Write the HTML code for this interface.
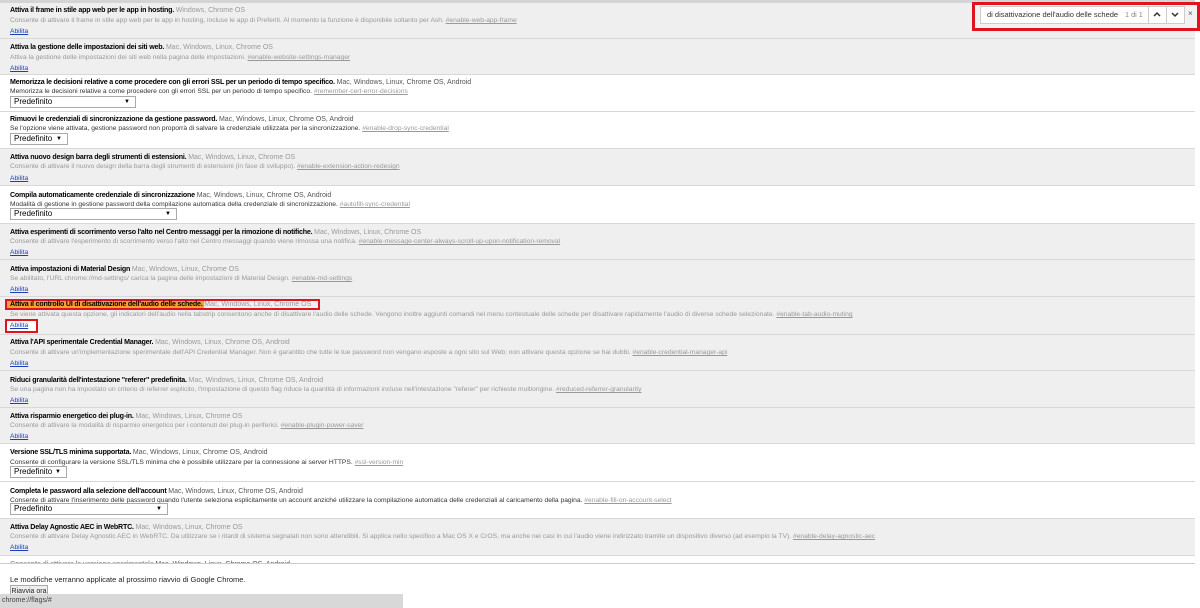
<!DOCTYPE html>
<html><head><meta charset="utf-8">
<style>
*{margin:0;padding:0;box-sizing:border-box}
body{width:1200px;height:608px;overflow:hidden;background:#fff;font-family:"Liberation Sans",sans-serif;position:relative}
.e{position:absolute;left:0;width:1195px;border-bottom:1px solid #d8d8d8}
.g{background:#efefef}
.w{background:#fff}
.t{position:absolute;left:10px;font-size:7.1px;color:#000;white-space:nowrap;line-height:8px;letter-spacing:-0.2px}
.t b{font-weight:bold}
.t .p{color:#555;font-size:7px;letter-spacing:0}
.g .t .p{color:#999}
.d{position:absolute;left:10px;font-size:6.7px;color:#333;white-space:nowrap;line-height:8px}
.g .d{color:#999}
.d u{color:#999}
.a{position:absolute;left:10px;font-size:6.7px;color:#1a3fb8;text-decoration:underline;line-height:8px}
.s{position:absolute;left:10px;height:12px;border:1px solid #aaa;background:#fff;font-size:8px;line-height:10px;padding-left:3px;color:#000}
.s i{position:absolute;right:5px;top:0;font-style:normal;font-size:6px}
</style></head><body>
<div style="position:absolute;left:0;top:0;width:1195px;height:3px;background:#d4d4d4"></div>

<div class="e g" style="top:3px;height:36px">
<div class="t" style="top:3px"><b>Attiva il frame in stile app web per le app in hosting.</b> <span class="p">Windows, Chrome OS</span></div>
<div class="d" style="top:14px">Consente di attivare il frame in stile app web per le app in hosting, incluse le app di Preferiti. Al momento la funzione è disponibile soltanto per Ash. <u>#enable-web-app-frame</u></div>
<div class="a" style="top:25px">Abilita</div></div>

<div class="e g" style="top:39px;height:36px">
<div class="t" style="top:4px"><b>Attiva la gestione delle impostazioni dei siti web.</b> <span class="p">Mac, Windows, Linux, Chrome OS</span></div>
<div class="d" style="top:15px">Attiva la gestione delle impostazioni dei siti web nella pagina delle impostazioni. <u>#enable-website-settings-manager</u></div>
<div class="a" style="top:26px">Abilita</div></div>

<div class="e w" style="top:75px;height:37px">
<div class="t" style="top:3px"><b>Memorizza le decisioni relative a come procedere con gli errori SSL per un periodo di tempo specifico.</b> <span class="p">Mac, Windows, Linux, Chrome OS, Android</span></div>
<div class="d" style="top:13px">Memorizza le decisioni relative a come procedere con gli errori SSL per un periodo di tempo specifico. <u>#remember-cert-error-decisions</u></div>
<div class="s" style="top:21px;width:126px">Predefinito<i>▼</i></div></div>

<div class="e w" style="top:112px;height:37px">
<div class="t" style="top:3px"><b>Rimuovi le credenziali di sincronizzazione da gestione password.</b> <span class="p">Mac, Windows, Linux, Chrome OS, Android</span></div>
<div class="d" style="top:13px">Se l'opzione viene attivata, gestione password non proporrà di salvare la credenziale utilizzata per la sincronizzazione. <u>#enable-drop-sync-credential</u></div>
<div class="s" style="top:21px;width:58px">Predefinito<i>▼</i></div></div>

<div class="e g" style="top:149px;height:37px">
<div class="t" style="top:4px"><b>Attiva nuovo design barra degli strumenti di estensioni.</b> <span class="p">Mac, Windows, Linux, Chrome OS</span></div>
<div class="d" style="top:14px">Consente di attivare il nuovo design della barra degli strumenti di estensioni (in fase di sviluppo). <u>#enable-extension-action-redesign</u></div>
<div class="a" style="top:26px">Abilita</div></div>

<div class="e w" style="top:186px;height:38px">
<div class="t" style="top:5px"><b>Compila automaticamente credenziale di sincronizzazione</b> <span class="p">Mac, Windows, Linux, Chrome OS, Android</span></div>
<div class="d" style="top:15px">Modalità di gestione in gestione password della compilazione automatica della credenziale di sincronizzazione. <u>#autofill-sync-credential</u></div>
<div class="s" style="top:22px;width:167px">Predefinito<i>▼</i></div></div>

<div class="e g" style="top:224px;height:36px">
<div class="t" style="top:4px"><b>Attiva esperimenti di scorrimento verso l'alto nel Centro messaggi per la rimozione di notifiche.</b> <span class="p">Mac, Windows, Linux, Chrome OS</span></div>
<div class="d" style="top:14px">Consente di attivare l'esperimento di scorrimento verso l'alto nel Centro messaggi quando viene rimossa una notifica. <u>#enable-message-center-always-scroll-up-upon-notification-removal</u></div>
<div class="a" style="top:25px">Abilita</div></div>

<div class="e g" style="top:260px;height:37px">
<div class="t" style="top:5px"><b>Attiva impostazioni di Material Design</b> <span class="p">Mac, Windows, Linux, Chrome OS</span></div>
<div class="d" style="top:15px">Se abilitato, l'URL chrome://md-settings/ carica la pagina delle impostazioni di Material Design. <u>#enable-md-settings</u></div>
<div class="a" style="top:26px">Abilita</div></div>

<div class="e g" style="top:297px;height:38px">
<div style="position:absolute;left:5px;top:2px;width:315px;height:11px;border:2px solid #e0141e"></div>
<div style="position:absolute;left:7px;top:4px;width:197px;height:7px;background:#f5a030"></div>
<div class="t" style="top:3px"><b>Attiva il controllo UI di disattivazione dell'audio delle schede.</b> <span class="p">Mac, Windows, Linux, Chrome OS</span></div>
<div class="d" style="top:14px">Se viene attivata questa opzione, gli indicatori dell'audio nella tabstrip consentono anche di disattivare l'audio delle schede. Vengono inoltre aggiunti comandi nel menu contestuale delle schede per disattivare rapidamente l'audio di diverse schede selezionate. <u>#enable-tab-audio-muting</u></div>
<div style="position:absolute;left:5px;top:22px;width:33px;height:14px;border:2px solid #e0141e;background:#fff"></div>
<div class="a" style="top:25px">Abilita</div></div>

<div class="e g" style="top:335px;height:36px">
<div class="t" style="top:3px"><b>Attiva l'API sperimentale Credential Manager.</b> <span class="p">Mac, Windows, Linux, Chrome OS, Android</span></div>
<div class="d" style="top:14px">Consente di attivare un'implementazione sperimentale dell'API Credential Manager. Non è garantito che tutte le tue password non vengano esposte a ogni sito sul Web; non attivare questa opzione se hai dubbi. <u>#enable-credential-manager-api</u></div>
<div class="a" style="top:25px">Abilita</div></div>

<div class="e g" style="top:371px;height:37px">
<div class="t" style="top:5px"><b>Riduci granularità dell'intestazione "referer" predefinita.</b> <span class="p">Mac, Windows, Linux, Chrome OS, Android</span></div>
<div class="d" style="top:15px">Se una pagina non ha impostato un criterio di referrer esplicito, l'impostazione di questo flag riduce la quantità di informazioni incluse nell'intestazione "referer" per richieste multiorigine. <u>#reduced-referrer-granularity</u></div>
<div class="a" style="top:26px">Abilita</div></div>

<div class="e g" style="top:408px;height:36px">
<div class="t" style="top:4px"><b>Attiva risparmio energetico dei plug-in.</b> <span class="p">Mac, Windows, Linux, Chrome OS</span></div>
<div class="d" style="top:14px">Consente di attivare la modalità di risparmio energetico per i contenuti dei plug-in periferici. <u>#enable-plugin-power-saver</u></div>
<div class="a" style="top:25px">Abilita</div></div>

<div class="e w" style="top:444px;height:38px">
<div class="t" style="top:4px"><b>Versione SSL/TLS minima supportata.</b> <span class="p">Mac, Windows, Linux, Chrome OS, Android</span></div>
<div class="d" style="top:15px">Consente di configurare la versione SSL/TLS minima che è possibile utilizzare per la connessione ai server HTTPS. <u>#ssl-version-min</u></div>
<div class="s" style="top:22px;width:57px">Predefinito<i>▼</i></div></div>

<div class="e w" style="top:482px;height:37px">
<div class="t" style="top:5px"><b>Completa le password alla selezione dell'account</b> <span class="p">Mac, Windows, Linux, Chrome OS, Android</span></div>
<div class="d" style="top:15px">Consente di attivare l'inserimento delle password quando l'utente seleziona esplicitamente un account anziché utilizzare la compilazione automatica delle credenziali al caricamento della pagina. <u>#enable-fill-on-account-select</u></div>
<div class="s" style="top:21px;width:158px">Predefinito<i>▼</i></div></div>

<div class="e g" style="top:519px;height:37px">
<div class="t" style="top:4px"><b>Attiva Delay Agnostic AEC in WebRTC.</b> <span class="p">Mac, Windows, Linux, Chrome OS</span></div>
<div class="d" style="top:14px">Consente di attivare Delay Agnostic AEC in WebRTC. Da utilizzare se i ritardi di sistema segnalati non sono attendibili. Si applica nello specifico a Mac OS X e CrOS, ma anche nei casi in cui l'audio viene indirizzato tramite un dispositivo diverso (ad esempio la TV). <u>#enable-delay-agnostic-aec</u></div>
<div class="a" style="top:25px">Abilita</div></div>

<div class="e w" style="top:556px;height:8px;overflow:hidden;border-bottom:1px solid #ccc">
<div class="t" style="top:4px;color:#999"><b>Consente di attivare la versione sperimentale</b> <span class="p">Mac, Windows, Linux, Chrome OS, Android</span></div></div>

<div style="position:absolute;left:10px;top:575px;font-size:7.5px;color:#222;white-space:nowrap">Le modifiche verranno applicate al prossimo riavvio di Google Chrome.</div>
<div style="position:absolute;left:10px;top:585px;width:38px;height:14px;border:1px solid #aaa;background:#eee;font-size:7px;line-height:12px;text-align:center;color:#222;white-space:nowrap">Riavvia ora</div>
<div style="position:absolute;left:0;top:594px;width:403px;height:14px;background:#d8d8d8;font-size:7px;line-height:14px;color:#444;padding-left:2px">chrome://flags/#</div>

<div style="position:absolute;left:972px;top:2px;width:228px;height:29px;border:3px solid #e0141e;background:#f2f2f2"></div>
<div style="position:absolute;left:980px;top:6px;width:205px;height:18px;border:1px solid #ccc;background:#fff"></div>
<div style="position:absolute;left:987px;top:10px;font-size:7.5px;color:#333;white-space:nowrap">di disattivazione dell'audio delle schede</div>
<div style="position:absolute;left:1125px;top:10px;font-size:7.3px;color:#888">1 di 1</div>
<div style="position:absolute;left:1148px;top:6px;width:1px;height:18px;background:#ccc"></div>
<div style="position:absolute;left:1166px;top:6px;width:1px;height:18px;background:#ccc"></div>
<svg style="position:absolute;left:1152px;top:10px" width="10" height="8"><path d="M2 6 L5 3 L8 6" stroke="#333" stroke-width="1.5" fill="none"/></svg>
<svg style="position:absolute;left:1170px;top:10px" width="10" height="8"><path d="M2 3 L5 6 L8 3" stroke="#333" stroke-width="1.5" fill="none"/></svg>
<div style="position:absolute;left:1188px;top:9px;font-size:8px;color:#555">×</div>
</body></html>
